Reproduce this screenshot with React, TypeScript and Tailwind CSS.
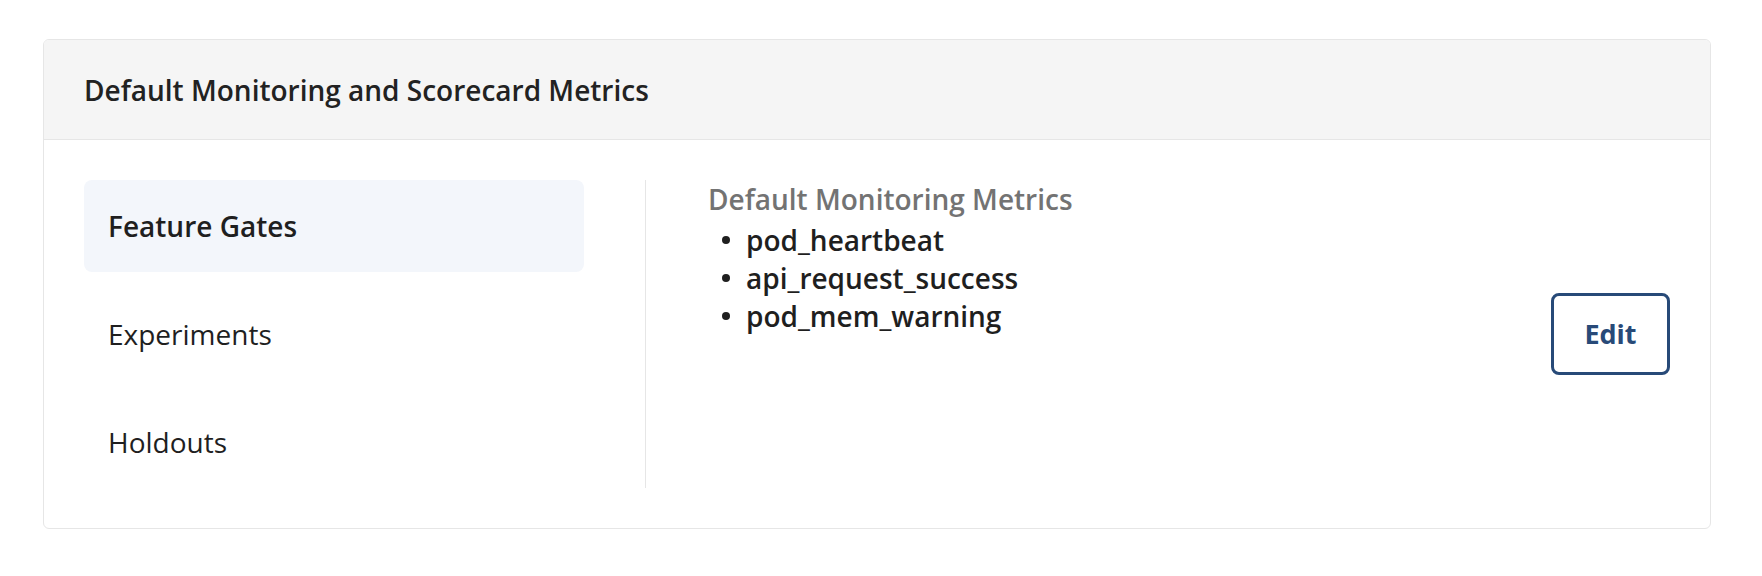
const navItems = ["Feature Gates", "Experiments", "Holdouts"];
const metrics = ["pod_heartbeat", "api_request_success", "pod_mem_warning"];

export default function App() {
  return (
    <div className="min-h-screen bg-white pl-[43px] pr-[51px] py-[39px] font-['Open_Sans',sans-serif] text-[#1f1f1f]">
      <section className="overflow-hidden rounded-md border border-[#e6e6e6]">
        <header className="flex h-[100px] items-center border-b border-[#e6e6e6] bg-[#f5f5f5] px-10">
          <h2 className="text-[28px] font-semibold text-[#222]">Default Monitoring and Scorecard Metrics</h2>
        </header>
        <div className="flex p-10">
          <nav className="flex w-[500px] shrink-0 flex-col gap-4">
            {navItems.map((item, i) => (
              <div
                key={item}
                className={
                  i === 0
                    ? "flex h-[92px] items-center rounded-lg bg-[#f3f6fb] px-6 text-[28px] font-semibold"
                    : "flex h-[92px] items-center rounded-lg px-6 text-[28px]"
                }
              >
                {item}
              </div>
            ))}
          </nav>
          <div className="ml-[61px] flex flex-1 items-center border-l border-[#e6e6e6] pl-[62px]">
            <div className="flex-1 self-start">
              <div className="text-[28px] font-semibold leading-[38px] text-[#737373]">Default Monitoring Metrics</div>
              <ul className="mt-[3px] flex flex-col">
                {metrics.map((m) => (
                  <li key={m} className="flex items-center gap-4 pl-[14px] text-[28px] font-semibold leading-[38px]">
                    <span className="h-[8px] w-[8px] rounded-full bg-[#1f1f1f]" />
                    {m}
                  </li>
                ))}
              </ul>
            </div>
            <button className="h-[82px] w-[119px] rounded-lg border-[3px] border-[#284a78] text-[27px] font-bold text-[#284a78]">
              Edit
            </button>
          </div>
        </div>
      </section>
    </div>
  );
}
